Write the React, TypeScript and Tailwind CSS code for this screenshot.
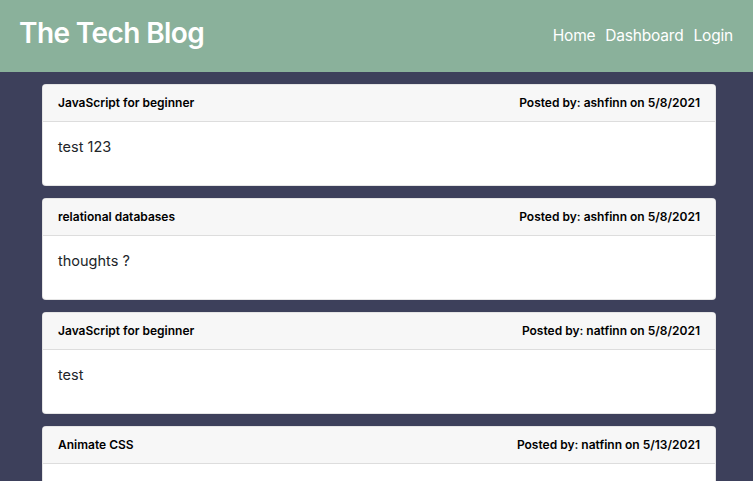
import React from 'react';

const posts = [
  { title: 'JavaScript for beginner', author: 'ashfinn', date: '5/8/2021', body: 'test 123' },
  { title: 'relational databases', author: 'ashfinn', date: '5/8/2021', body: 'thoughts ?' },
  { title: 'JavaScript for beginner', author: 'natfinn', date: '5/8/2021', body: 'test' },
  { title: 'Animate CSS', author: 'natfinn', date: '5/13/2021', body: 'css' },
];

export default function App() {
  return (
    <div className="min-h-screen bg-[#3d405b] font-['Inter','Liberation_Sans',sans-serif]">
      <header className="h-[72px] bg-[#8ab19b] flex items-center justify-between pl-[19px] pr-[20px]">
        <h1 className="text-[28px] font-semibold text-white tracking-[-0.6px] pb-[6px]">The Tech Blog</h1>
        <nav className="flex gap-[10px] text-[15.5px] text-white tracking-[-0.2px]">
          <a>Home</a>
          <a>Dashboard</a>
          <a>Login</a>
        </nav>
      </header>
      <main className="pl-[42px] pt-[12px] pr-[37px] flex flex-col gap-[12px]">
        {posts.map((p, i) => (
          <div key={i} className="bg-white rounded-[4px] border border-black/10 overflow-hidden">
            <div className="h-[37px] bg-[#f7f7f7] border-b border-black/10 flex items-center justify-between px-[15px] text-[12px] font-semibold text-black">
              <span>{p.title}</span>
              <span>Posted by: {p.author} on {p.date}</span>
            </div>
            <div className="h-[63px] px-[15px] pt-[14px] text-[14.5px] text-[#212529]">{p.body}</div>
          </div>
        ))}
      </main>
    </div>
  );
}
